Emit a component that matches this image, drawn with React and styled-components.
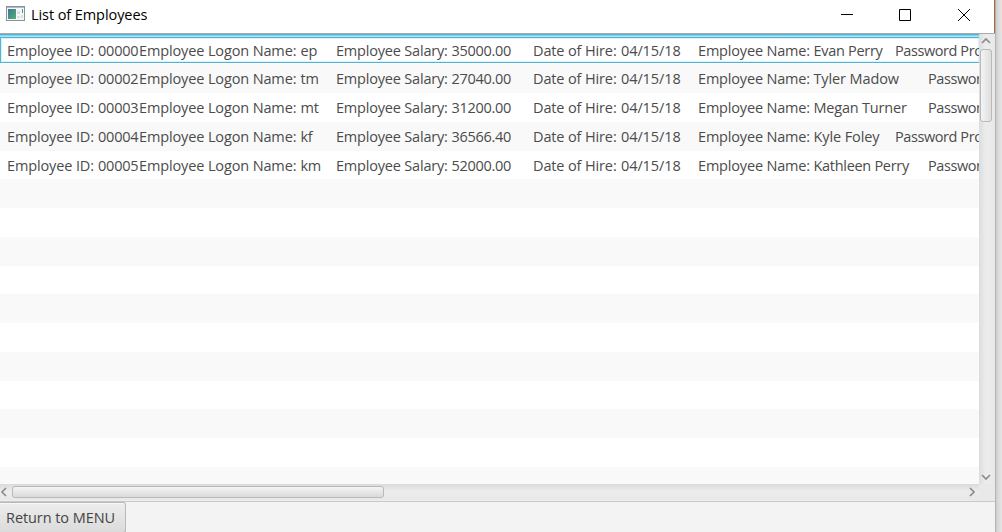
import React from 'react';
import styled, { createGlobalStyle } from 'styled-components';

const GlobalStyle = createGlobalStyle`
  * { box-sizing: border-box; }
  body { margin: 0; overflow: hidden; background: #dedede; font-family: "Open Sans", "Noto Sans", sans-serif; }
`;

const Desktop = styled.div`
  width: 1002px;
  height: 532px;
  overflow: hidden;
  display: flex;
  background: linear-gradient(90deg, #dedede 995px, #c4c4c4 995px, #d9d9d9 998px, #e6e6e6 1002px);
`;

const Window = styled.div`
  width: 996px;
  display: flex;
  flex-direction: column;
  background: #f3f3f3;
  border-right: 1px solid #b4b4b4;
`;

const TitleBar = styled.header`
  flex: none;
  height: 33px;
  display: flex;
  align-items: flex-start;
  background: #fff;
  width: 995px;
  border-right: 1px solid #a9683a;
`;

const AppIcon = styled.svg`
  flex: none;
  margin: 6px 0 0 6px;
`;

const Title = styled.h1`
  margin: 5px auto 0 6px;
  font-size: 14.5px;
  line-height: 20px;
  font-weight: 400;
  letter-spacing: ${(p) => p.$spacing};
  color: #000;
  white-space: nowrap;
`;

const WindowButton = styled.svg`
  flex: none;
  width: 12px;
  height: 12px;
  margin: 9px ${(p) => p.$gap}px 0 0;
  fill: none;
  stroke: #000;
`;

const ListFrame = styled.main`
  flex: none;
  height: 469px;
  display: grid;
  grid-template: 450px 17px / 979px 16px;
  border-top: 1px solid #a9a9a9;
  border-bottom: 1px solid #c8c8c8;
`;

const ListView = styled.div`
  overflow: hidden;
  background: #fff;
  border-top: 1px solid #4db5d8;
  box-shadow: inset 0 1px #8fd0e6, inset 0 2px #b5e1ef;
`;

const Row = styled.div`
  height: 28.75px;
  width: 1100px;
  display: flex;
  padding: 0 0 0 7px;
  background: ${(p) => (p.$odd ? '#f9f9f9' : 'transparent')};
`;

const FocusedRow = styled(Row)`
  width: 980px;
  height: 26px;
  margin: 2px 0 1.3px 0;
  overflow: hidden;
  padding-left: 6px;
  border: 1px solid #4db5d8;
  box-shadow: inset 0 0 0 1px #dcf2f9;
`;

const Field = styled.span`
  flex: none;
  width: ${(p) => p.$width}px;
  font-size: 14.5px;
  line-height: ${(p) => (p.$focused ? 25 : 29.6)}px;
  letter-spacing: ${(p) => p.$spacing}px;
  color: #4b4b4b;
  white-space: nowrap;
`;

const VScroll = styled.div`
  display: flex;
  flex-direction: column;
  align-items: center;
  background: linear-gradient(90deg, #dcdcdc, #ececec 40%, #e9e9e9);
  padding: 3px 2px 3px 0;
`;

const HScroll = styled.div`
  display: flex;
  align-items: center;
  background: linear-gradient(#dadada, #ececec 45%, #e8e8e8);
  border-bottom: 1px solid #eee;
`;

const Corner = styled.div`
  background: #e9e9e9;
`;

const VThumb = styled.div`
  width: 12px;
  height: 73px;
  margin: 4px 0 auto;
  border: 1px solid #b9b9b9;
  border-radius: 3px;
  background: linear-gradient(90deg, #f4f4f4, #dedede);
`;

const HThumb = styled.div`
  width: 372px;
  height: 12px;
  margin: 0 auto 0 4px;
  border: 1px solid #b9b9b9;
  border-radius: 3px;
  background: linear-gradient(#f4f4f4, #dadada);
`;

const Arrow = styled.svg`
  flex: none;
  display: block;
  fill: none;
  stroke: #8c8c8c;
  stroke-width: 1.7;
  margin-right: ${(p) => p.$end || 0}px;
`;

const Footer = styled.footer`
  flex: 1;
  display: flex;
  align-items: flex-start;
`;

const MenuButton = styled.button`
  width: 126px;
  height: 31px;
  padding: 1px 0 0 6px;
  border: 1px solid #b9b9b9;
  border-left: 0;
  border-radius: 0 3px 3px 0;
  background: linear-gradient(#ededed, #dbdbdb);
  box-shadow: inset 0 1px #f8f8f8;
  font: 14.5px/20px "Open Sans", sans-serif;
  letter-spacing: -0.07px;
  text-align: left;
  color: #444;
`;

const employees = [
  ['00000', 'ep', '35000.00', 'Evan Perry', 197, -0.3],
  ['00002', 'tm', '27040.00', 'Tyler Madow', 230, -0.12],
  ['00003', 'mt', '31200.00', 'Megan Turner', 230, -0.2],
  ['00004', 'kf', '36566.40', 'Kyle Foley', 197, -0.1],
  ['00005', 'km', '52000.00', 'Kathleen Perry', 230, -0.3],
];

function EmployeeRow({ data, index }) {
  const [id, logon, salary, name, nameWidth, nameSpacing] = data;
  const focused = index === 0;
  const Container = focused ? FocusedRow : Row;
  const fields = [
    ['Employee ID: ', 91, -0.13],
    [id, 41, -0.2],
    ['Employee Logon Name: ', 161.5, -0.13],
    [logon, 35.5, -0.25],
    ['Employee Salary: ', 115.5, -0.19],
    [salary, 81.5, -0.3],
    ['Date of Hire: ', 88, -0.13],
    ['04/15/18', 77, -0.1],
    ['Employee Name: ', 115.5, -0.18],
    [name, nameWidth - 115.5, nameSpacing],
    ['Password Protected', 140, -0.42],
  ];
  return (
    <Container $odd={index % 2 === 1}>
      {fields.map(([text, width, spacing], i) => (
        <Field key={i} $width={width} $spacing={spacing} $focused={focused}>{text}</Field>
      ))}
    </Container>
  );
}

export default function App() {
  return (
    <Desktop>
      <GlobalStyle />
      <Window>
        <TitleBar>
          <AppIcon width="19" height="16" viewBox="0 0 19 16">
            <defs>
              <linearGradient id="pane" x1="0" y1="0" x2="1" y2="1">
                <stop offset="0" stopColor="#3b769b" />
                <stop offset="1" stopColor="#58b06c" />
              </linearGradient>
            </defs>
            <rect x="0.5" y="0.5" width="18" height="14" fill="#f5f6f7" stroke="#87949f" />
            <path d="M1 1.5h17" stroke="#aeb9c3" />
            <rect x="2" y="3" width="8" height="10" fill="url(#pane)" />
            <path d="M11 5h3v3h-3zM11 10h3v2h-3zM15 9h2v3h-2z" fill="#dde0e2" />
            <path d="M16.5 3v4" stroke="#4c9a83" />
          </AppIcon>
          <Title $spacing="-0.08px">List of Employees</Title>
          <WindowButton $gap={46}><path d="M0 5.5h12" /></WindowButton>
          <WindowButton $gap={47}><path d="M.5 .5h11v11H.5z" /></WindowButton>
          <WindowButton $gap={24}><path d="M0 0l12 12M12 0L0 12" /></WindowButton>
        </TitleBar>
        <ListFrame>
          <ListView>
            {employees.map((data, i) => <EmployeeRow key={data[0]} data={data} index={i} />)}
            {Array.from({ length: 11 }, (_, i) => <Row key={i} $odd={i % 2 === 0} />)}
          </ListView>
          <VScroll>
            <Arrow width="10" height="8" viewBox="0 0 10 8"><path d="M1 6l4-4 4 4" /></Arrow>
            <VThumb />
            <Arrow width="10" height="8" viewBox="0 0 10 8"><path d="M1 2l4 4 4-4" /></Arrow>
          </VScroll>
          <HScroll>
            <Arrow width="8" height="10" viewBox="0 0 8 10"><path d="M6 1L2 5l4 4" /></Arrow>
            <HThumb />
            <Arrow $end={3} width="8" height="10" viewBox="0 0 8 10"><path d="M2 1l4 4-4 4" /></Arrow>
          </HScroll>
          <Corner />
        </ListFrame>
        <Footer>
          <MenuButton>Return to MENU</MenuButton>
        </Footer>
      </Window>
    </Desktop>
  );
}
